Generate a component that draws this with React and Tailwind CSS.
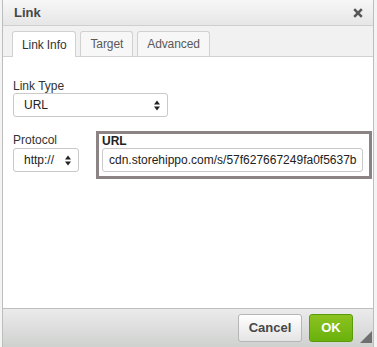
import React from 'react'

function SelectBox({ value, className }) {
  return (
    <div className={`flex items-center justify-between h-[24px] pl-[10px] pr-[7px] bg-white border border-[#c9c9c9] rounded-[3px] text-[12px] text-[#222] ${className}`}>
      <span>{value}</span>
      <svg width="6" height="11" viewBox="0 0 6 11">
        <path d="M0 4.5 L3 0.5 L6 4.5 Z" fill="#222" />
        <path d="M0 6.5 L3 10.5 L6 6.5 Z" fill="#222" />
      </svg>
    </div>
  )
}

function Tab({ label, active }) {
  return (
    <div
      className={`h-[25px] px-[9px] flex items-center border border-b-0 border-[#d1d1d1] rounded-t-[3px] text-[12px] tracking-[-0.1px] ${
        active ? 'bg-white text-[#333] h-[26px] -mb-px' : 'bg-[#f7f7f7] text-[#595959]'
      }`}
    >
      {label}
    </div>
  )
}

function App() {
  return (
    <div className="w-[377px] h-[347px] bg-[#f4f4f4] overflow-hidden" style={{ fontFamily: '"Liberation Sans", Arial, sans-serif' }}>
      <div className="ml-[2px] w-[372px] h-[347px] flex flex-col bg-white border-x border-[#bdbdbd]">
        <div className="h-[26px] shrink-0 flex items-center justify-between pl-[11px] pr-[10px] bg-gradient-to-b from-[#f7f7f7] to-[#e6e6e6] border-b border-[#cfcfcf]">
          <span className="text-[13px] font-bold text-[#474747]">Link</span>
          <svg width="10" height="10" viewBox="0 0 10 10">
            <path d="M1.2 1.2 L8.8 8.8 M8.8 1.2 L1.2 8.8" stroke="#575757" strokeWidth="2.6" />
          </svg>
        </div>

        <div className="h-[31px] shrink-0 flex items-end gap-[4px] pl-[9px] bg-[#f1f1f1] border-b border-[#d1d1d1]">
          <Tab label="Link Info" active />
          <Tab label="Target" />
          <Tab label="Advanced" />
        </div>

        <div className="flex-1 pl-[10px] pr-[1px] text-[#333] text-[12px]">
          <div className="mt-[22px] leading-[14px]">Link Type</div>
          <SelectBox value="URL" className="w-[155px]" />

          <div className="mt-[14px] flex">
            <div className="pt-[2px]">
              <div className="leading-[14px]">Protocol</div>
              <SelectBox value="http://" className="w-[66px] mt-[1px]" />
            </div>
            <div className="ml-[17px] flex-1 h-[48px] border-[3px] border-[#8c8484] pl-[3px] pr-[6px]">
              <div className="font-bold leading-[14px] text-[#222]">URL</div>
              <div className="h-[24px] flex items-center pl-[6px] bg-white border border-[#c9c9c9] rounded-[3px] text-[12px] text-[#222] whitespace-nowrap overflow-hidden">
                cdn.storehippo.com/s/57f627667249fa0f5637b
              </div>
            </div>
          </div>
        </div>

        <div className="h-[39px] shrink-0 flex items-center justify-end gap-[7px] pr-[20px] bg-gradient-to-b from-[#ebebeb] to-[#cfd1cf] border-t border-[#bdbdbd] relative">
          <button className="h-[28px] w-[64px] rounded-[3px] border border-[#b6b6b6] bg-gradient-to-b from-white to-[#e4e4e4] text-[13px] font-bold text-[#474747]">
            Cancel
          </button>
          <button className="h-[28px] w-[44px] rounded-[3px] border border-[#5b9a0c] bg-gradient-to-b from-[#8cc320] to-[#69b10b] text-[13px] font-bold text-white">
            OK
          </button>
          <svg className="absolute right-[1px] bottom-[4px]" width="12" height="12" viewBox="0 0 12 12">
            <path d="M12 0 L12 12 L0 12 Z" fill="#6f6f6f" />
          </svg>
        </div>
      </div>
    </div>
  )
}

export default App
